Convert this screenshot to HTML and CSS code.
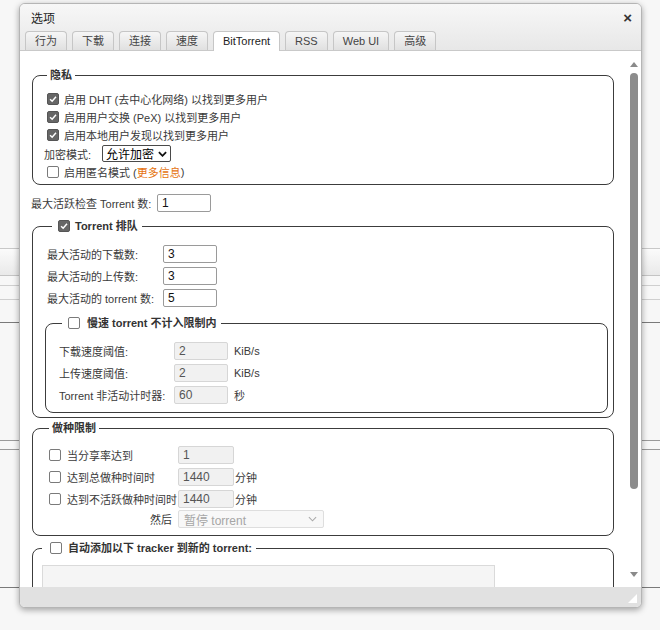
FILE: index.html
```html
<!DOCTYPE html>
<html lang="zh-CN">
<head>
    <meta charset="UTF-8">
    <meta name="viewport" content="width=device-width, initial-scale=1.0">
    <title>选项</title>
    <link rel="stylesheet" href="styles.css">
</head>
<body>
    <!-- page content behind the dialog -->
    <div class="backdrop">
        <div class="bg-band"></div>
        <div class="bg-line l1"></div>
        <div class="bg-line l2"></div>
        <div class="bg-line l3 dark"></div>
        <div class="bg-line l4"></div>
        <div class="bg-line l5"></div>
        <div class="bg-line l6 dark"></div>
    </div>

    <div class="dialog">
        <div class="head">
            <div class="titlebar">
                <span class="title">选项</span>
                <span class="close">&times;</span>
            </div>
            <div class="tabs">
                <span class="tab">行为</span>
                <span class="tab">下载</span>
                <span class="tab">连接</span>
                <span class="tab">速度</span>
                <span class="tab active">BitTorrent</span>
                <span class="tab">RSS</span>
                <span class="tab">Web UI</span>
                <span class="tab">高级</span>
            </div>
        </div>

        <div class="body">
            <div class="panel">
                <fieldset class="box privacy">
                    <legend>隐私</legend>
                    <div class="row"><span class="cb on"><svg viewBox="0 0 12 12"><path d="M2.5 6.2 L5 8.6 L9.6 3.4" /></svg></span>启用 DHT (去中心化网络) 以找到更多用户</div>
                    <div class="row"><span class="cb on"><svg viewBox="0 0 12 12"><path d="M2.5 6.2 L5 8.6 L9.6 3.4" /></svg></span>启用用户交换 (PeX) 以找到更多用户</div>
                    <div class="row"><span class="cb on"><svg viewBox="0 0 12 12"><path d="M2.5 6.2 L5 8.6 L9.6 3.4" /></svg></span>启用本地用户发现以找到更多用户</div>
                    <div class="row enc-row">
                        <span class="enc-label">加密模式:</span>
                        <span class="select">允许加密<svg class="chev" viewBox="0 0 10 6"><path d="M1 1 L5 5 L9 1" /></svg></span>
                    </div>
                    <div class="row"><span class="cb"></span>启用匿名模式 (<a href="#" class="more">更多信息</a>)</div>
                </fieldset>

                <div class="row field-row checking">
                    <span class="lbl wide">最大活跃检查 Torrent 数:</span>
                    <input type="text" class="num" value="1">
                </div>

                <fieldset class="box queue">
                    <legend><span class="cb on"><svg viewBox="0 0 12 12"><path d="M2.5 6.2 L5 8.6 L9.6 3.4" /></svg></span>Torrent 排队</legend>
                    <div class="row field-row"><span class="lbl">最大活动的下载数:</span><input type="text" class="num" value="3"></div>
                    <div class="row field-row"><span class="lbl">最大活动的上传数:</span><input type="text" class="num" value="3"></div>
                    <div class="row field-row"><span class="lbl">最大活动的 torrent 数:</span><input type="text" class="num" value="5"></div>

                    <fieldset class="box slow">
                        <legend><span class="cb"></span>慢速 torrent 不计入限制内</legend>
                        <div class="row field-row"><span class="lbl">下载速度阈值:</span><input type="text" class="num" value="2" disabled><span class="unit">KiB/s</span></div>
                        <div class="row field-row"><span class="lbl">上传速度阈值:</span><input type="text" class="num" value="2" disabled><span class="unit">KiB/s</span></div>
                        <div class="row field-row"><span class="lbl">Torrent 非活动计时器:</span><input type="text" class="num" value="60" disabled><span class="unit">秒</span></div>
                    </fieldset>
                </fieldset>

                <fieldset class="box seeding">
                    <legend>做种限制</legend>
                    <div class="row field-row"><span class="lbl"><span class="cb"></span>当分享率达到</span><input type="text" class="num" value="1" disabled></div>
                    <div class="row field-row"><span class="lbl"><span class="cb"></span>达到总做种时间时</span><input type="text" class="num" value="1440" disabled><span class="unit">分钟</span></div>
                    <div class="row field-row"><span class="lbl"><span class="cb"></span>达到不活跃做种时间时</span><input type="text" class="num" value="1440" disabled><span class="unit">分钟</span></div>
                    <div class="row field-row then-row"><span class="lbl then">然后</span>
                        <span class="select off">暂停 torrent<svg class="chev" viewBox="0 0 10 6"><path d="M1 1 L5 5 L9 1" /></svg></span>
                    </div>
                </fieldset>

                <fieldset class="box trackers">
                    <legend><span class="cb"></span>自动添加以下 tracker 到新的 torrent:</legend>
                    <textarea disabled></textarea>
                </fieldset>
            </div>

            <div class="vscroll">
                <span class="arrow up"></span>
                <span class="thumb"></span>
                <span class="arrow down"></span>
            </div>
        </div>

        <div class="statusbar">
            <svg class="grip" viewBox="0 0 10 10"><path d="M10 0 L10 10 L0 10 Z" /></svg>
        </div>
    </div>
</body>
</html>
```

FILE: styles.css
```css
body {
    margin: 0;
    background-color: #f7f7f7;
    font-family: "Liberation Sans", "Noto Sans CJK SC", sans-serif;
    font-size: 11px;
    color: #3a3a3a;
}

/* faint page behind the dialog */
.backdrop {
    padding-top: 248px;
}
.bg-band {
    height: 26px;
    border-top: 1px solid #c8c8c8;
    border-bottom: 1px solid #c4c4c4;
    background: linear-gradient(#fbfbfb, #e9e9e9);
}
.bg-line {
    height: 1px;
    background-color: #cfcfcf;
}
.bg-line.dark {
    background-color: #7a7a7a;
}
.l1 { margin-top: 9px; }
.l2 { margin-top: 13px; }
.l3 { margin-top: 22px; }
.l4 { margin-top: 117px; background-color: #9a9a9a; }
.l5 { margin-top: 8px; background-color: #9a9a9a; }
.l6 { margin-top: 137px; }

/* dialog window */
.dialog {
    position: absolute;
    left: 19px;
    top: 3px;
    width: 623px;
    height: 605px;
    box-sizing: border-box;
    border: 1px solid #b5b5b5;
    border-radius: 6px;
    background-color: #fff;
    box-shadow: 0 2px 6px rgba(0, 0, 0, 0.35);
    display: flex;
    flex-direction: column;
    overflow: hidden;
}
.head {
    background: linear-gradient(#f7f7f7, #e7e7e7);
}
.titlebar {
    height: 26px;
    display: flex;
    align-items: center;
    justify-content: space-between;
    padding: 0 9px 0 11px;
}
.title {
    font-size: 12px;
    color: #222;
}
.close {
    font-size: 15px;
    font-weight: bold;
    color: #333;
    line-height: 1;
}
.tabs {
    height: 20px;
    border-bottom: 1px solid #c9c9c9;
    display: flex;
    align-items: flex-end;
    gap: 5px;
    padding-left: 5px;
}
.tab {
    height: 18px;
    line-height: 18px;
    padding: 0 9px;
    border: 1px solid #c6c6c6;
    border-bottom: none;
    border-radius: 4px 4px 0 0;
    background: linear-gradient(#f6f6f6, #e0e0e0);
    color: #444;
}
.tab.active {
    height: 19px;
    margin-bottom: -1px;
    background: #fff;
    color: #222;
}

.body {
    flex: 1;
    display: flex;
    min-height: 0;
}
.panel {
    flex: 1;
    overflow: hidden;
    padding: 17px 12px 0 12px;
}

/* fake scrollbar */
.vscroll {
    width: 15px;
    display: flex;
    flex-direction: column;
    align-items: center;
    padding: 11px 0 10px;
    box-sizing: border-box;
}
.arrow {
    width: 0;
    height: 0;
    border-left: 4px solid transparent;
    border-right: 4px solid transparent;
}
.arrow.up {
    border-bottom: 5px solid #8a8a8a;
}
.arrow.down {
    margin-top: auto;
    border-top: 5px solid #8a8a8a;
}
.thumb {
    margin-top: 6px;
    width: 8px;
    height: 416px;
    border-radius: 4px;
    background-color: #8c8c8c;
}

.statusbar {
    height: 20px;
    background-color: #e1e1e1;
    display: flex;
    justify-content: flex-end;
    align-items: flex-end;
}
.grip {
    width: 9px;
    height: 9px;
    margin: 0 4px 4px 0;
    fill: #fff;
}

/* form parts */
.box {
    margin: 0;
    border: 1px solid #3c3c3c;
    border-radius: 8px;
    min-width: 0;
}
.box legend {
    line-height: 14px;
    font-weight: bold;
    color: #333;
    display: flex;
    align-items: center;
}
.row {
    height: 18px;
    display: flex;
    align-items: center;
    white-space: nowrap;
}
.cb {
    width: 10px;
    height: 10px;
    border: 1px solid #7a7a7a;
    border-radius: 2px;
    background-color: #fff;
    margin-right: 6px;
    flex: 0 0 auto;
    display: inline-flex;
}
.cb.on {
    background-color: #666;
    border-color: #555;
}
.cb svg {
    width: 10px;
    height: 10px;
    fill: none;
    stroke: #fff;
    stroke-width: 1.8;
}
.more {
    color: #e5730f;
    text-decoration: none;
}

.privacy {
    padding: 8px 14px 3px 14px;
}
.privacy legend {
    padding: 0 3px;
}
.privacy .cb {
    margin-right: 5px;
}
.enc-row {
    height: 19px;
}
.enc-label {
    margin-left: -3px;
    width: 58px;
}
.select {
    height: 15px;
    width: 64px;
    box-sizing: content-box;
    border: 1px solid #4a4a4a;
    border-radius: 2px;
    padding: 0 0 0 3px;
    font-size: 12px;
    color: #000;
    display: flex;
    align-items: center;
    justify-content: space-between;
}
.chev {
    width: 9px;
    height: 6px;
    margin-right: 3px;
    fill: none;
    stroke: #111;
    stroke-width: 2;
}
.select.off {
    width: 139px;
    height: 16px;
    padding-left: 5px;
    border-color: #dedede;
    background-color: #f8f8f8;
    color: #a6a6a6;
}
.select.off .chev {
    stroke: #aaa;
    stroke-width: 1.2;
    margin-right: 6px;
}

input.num {
    height: 18px;
    width: 54px;
    box-sizing: border-box;
    border: 1px solid #9a9a9a;
    border-radius: 2px;
    padding: 0 4px;
    margin: 0;
    font-family: "Liberation Sans", sans-serif;
    font-size: 12px;
    color: #111;
    background-color: #fff;
}
input.num:disabled {
    border-color: #d6d6d6;
    background-color: #f1f1f1;
    color: #555;
}
.lbl {
    width: 116px;
    display: inline-flex;
    align-items: center;
    flex: 0 0 auto;
}
.unit {
    margin-left: 6px;
}

.checking {
    margin: 9px 0 0 -1px;
}
.lbl.wide {
    width: 126px;
}

.queue {
    margin-top: 7px;
    padding: 12px 5px 4px 12px;
}
.queue legend {
    margin-left: 7px;
    padding: 0 4px 0 6px;
}
.queue legend .cb {
    margin-right: 5px;
}
.queue > .field-row {
    margin: 0 0 4px 2px;
}

.slow {
    margin-top: 9px;
    padding: 12px 10px 8px 13px;
}
.slow legend {
    margin-left: 3px;
    padding: 0 4px 0 6px;
}
.slow legend .cb {
    margin-right: 7px;
}
.slow .field-row {
    margin: 0 0 4px 0;
}
.slow .field-row:last-child {
    margin-bottom: 0;
}
.slow .lbl {
    width: 115px;
}

.seeding {
    margin-top: 3px;
    padding: 11px 14px 7px 16px;
}
.seeding legend {
    padding: 0 3px;
}
.seeding .field-row {
    margin-bottom: 4px;
}
.seeding .field-row:nth-last-child(2) {
    margin-bottom: 2px;
}
.seeding .then-row {
    margin-bottom: 0;
}
.seeding .lbl {
    width: 129px;
}
.seeding input.num {
    width: 56px;
}
.seeding .unit {
    margin-left: 1px;
}
.lbl.then {
    justify-content: flex-end;
    padding-right: 6px;
    box-sizing: border-box;
}

.trackers {
    margin-top: 5px;
    padding: 10px 14px 10px 9px;
}
.trackers legend {
    margin-left: 0;
    padding: 0 4px 0 8px;
}
.trackers textarea {
    display: block;
    width: 453px;
    height: 60px;
    box-sizing: border-box;
    border: 1px solid #dadada;
    background-color: #f5f5f5;
    resize: none;
}
```
